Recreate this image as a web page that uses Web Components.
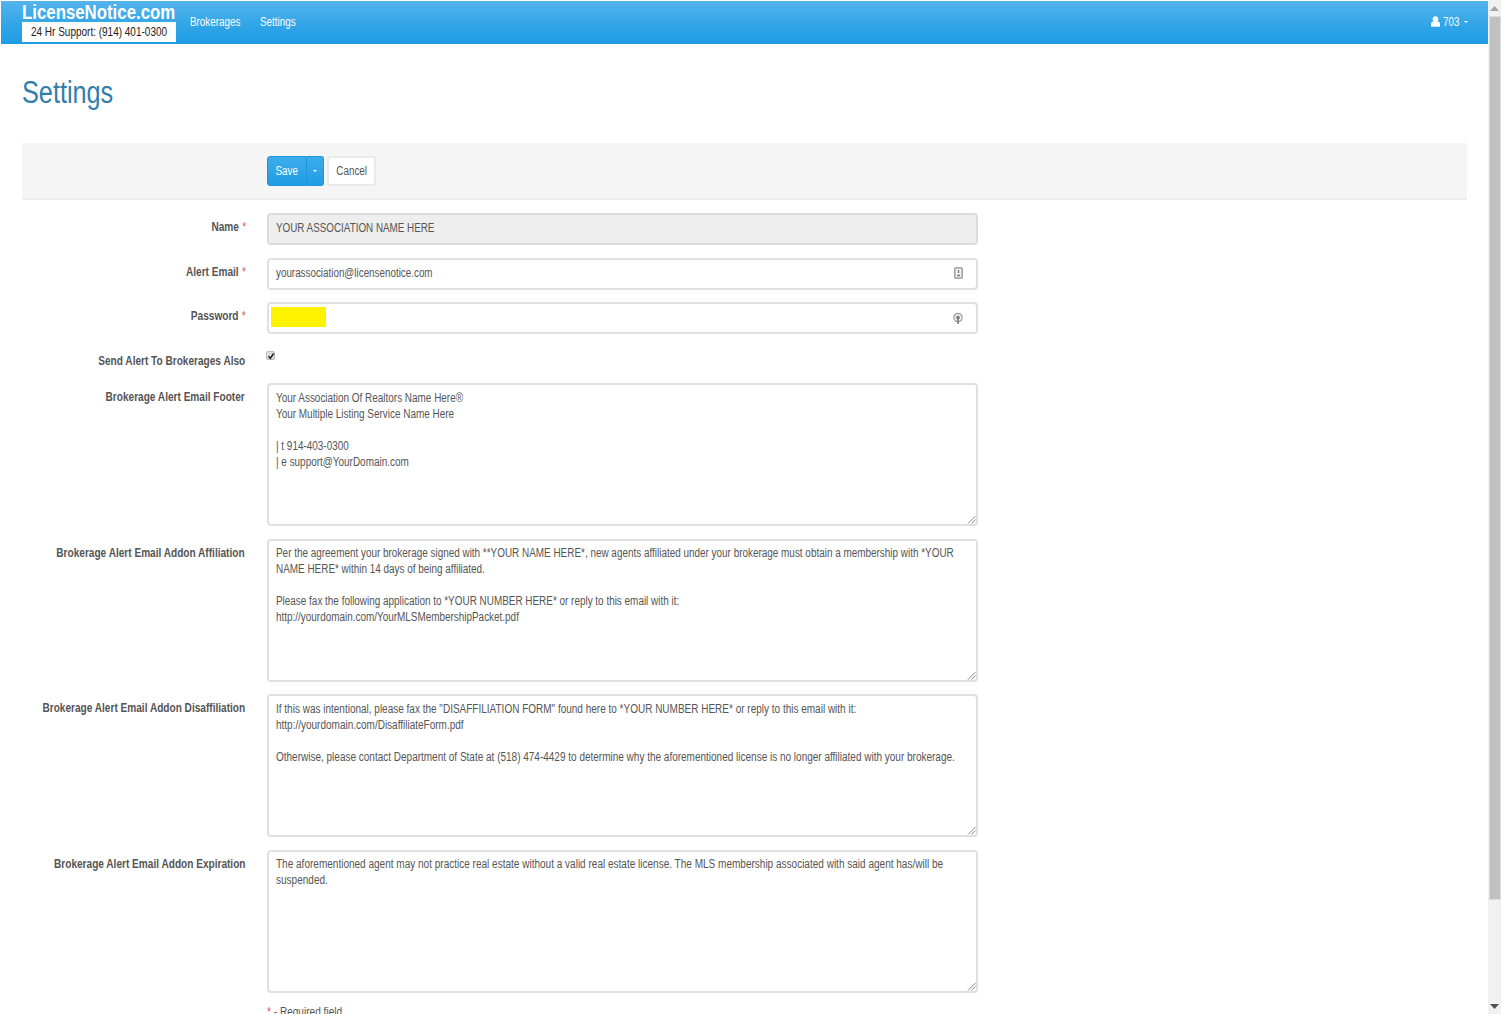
<!DOCTYPE html>
<html lang="en">
<head>
<meta charset="utf-8">
<title>Settings</title>
<style>
  html, body { margin: 0; height: 100%; background: #fff; overflow: hidden; }
  body { font: 12px/16px "Liberation Sans", Arial, sans-serif; color: #555; }
</style>
</head>
<body>
<app-shell>
  <top-nav></top-nav>
  <h-title>Settings</h-title>
  <form-toolbar></form-toolbar>
  <form-row label="Name" required style="--top:13px"><text-input disabled>YOUR ASSOCIATION NAME HERE</text-input></form-row>
  <form-row label="Alert Email" required style="--top:13px"><text-input icon="card">yourassociation@licensenotice.com</text-input></form-row>
  <form-row label="Password" required style="--top:12px;--label-top:6px"><text-input icon="key" masked></text-input></form-row>
  <form-row label="Send Alert To Brokerages Also" style="--top:16px;--label-top:3px"><check-box></check-box></form-row>
  <form-row label="Brokerage Alert Email Footer" style="--top:14px;--area-sq:.828"><text-area>Your Association Of Realtors Name Here®
Your Multiple Listing Service Name Here

| t 914-403-0300
| e support@YourDomain.com</text-area></form-row>
  <form-row label="Brokerage Alert Email Addon Affiliation" style="--top:13px;--pad:4px;--area-sq:.827"><text-area>Per the agreement your brokerage signed with **YOUR NAME HERE*, new agents affiliated under your brokerage must obtain a membership with *YOUR
NAME HERE* within 14 days of being affiliated.

Please fax the following application to *YOUR NUMBER HERE* or reply to this email with it:
http://yourdomain.com/YourMLSMembershipPacket.pdf</text-area></form-row>
  <form-row label="Brokerage Alert Email Addon Disaffiliation" style="--top:12px"><text-area>If this was intentional, please fax the "DISAFFILIATION FORM" found here to *YOUR NUMBER HERE* or reply to this email with it:
http://yourdomain.com/DisaffiliateForm.pdf

Otherwise, please contact Department of State at (518) 474-4429 to determine why the aforementioned license is no longer affiliated with your brokerage.</text-area></form-row>
  <form-row label="Brokerage Alert Email Addon Expiration" style="--top:13px;--pad:4px;--area-sq:.835"><text-area>The aforementioned agent may not practice real estate without a valid real estate license. The MLS membership associated with said agent has/will be
suspended.</text-area></form-row>
  <required-note></required-note>
</app-shell>
<script>
"use strict";
function define(name, css, html) {
  customElements.define(name, class extends HTMLElement {
    constructor() {
      super();
      this.attachShadow({ mode: 'open' }).innerHTML = `<style>${css}</style>${typeof html === 'function' ? html(this) : html}`;
    }
  });
}

// the reference is squeezed sideways, this keeps every text at about the same ratio
define('sq-text', `
  :host { display: block; white-space: pre; transform: scaleX(var(--sq, .82)); transform-origin: var(--o, left center); }
`, `<slot></slot>`);

define('app-shell', `
  :host { display: flex; height: 1014px; overflow: hidden; padding-right: 1px; }
  .page { flex: 1; min-width: 0; padding: 1px 0 0 1px; }
  .bar { flex: none; width: 13px; background: #f1f1f1; display: flex; flex-direction: column; align-items: center; }
  .arrow { height: 16px; display: flex; align-items: center; justify-content: center; }
  .thumb { width: 10px; height: 882px; background: #c1c1c1; border: 1px solid #dcdcdc; }
  .fill { flex: 1; }
`, `
  <div class="page"><slot></slot></div>
  <div class="bar">
    <div class="arrow"><svg width="9" height="5" viewBox="0 0 9 5"><path d="M4.5 0 9 5H0z" fill="#a3a3a3"/></svg></div>
    <div class="thumb"></div>
    <div class="fill"></div>
    <div class="arrow"><svg width="9" height="5" viewBox="0 0 9 5"><path d="M0 0h9L4.5 5z" fill="#505050"/></svg></div>
  </div>
`);

define('top-nav', `
  :host { display: flex; align-items: flex-start; height: 43px; color: #fff; box-sizing: border-box;
    background: linear-gradient(#54b4eb, #2fa4e7 60%, #1d9ce5); padding-left: 21px; }
  .brand { flex: none; width: 154px; }
  .name { font-size: 20.500px; font-weight: bold; line-height: 21px; }
  .support { background: #fff; color: #222; height: 20px; line-height: 20px; font-size: 12.200px; display: flex; justify-content: center; }
  .support sq-text { --o: center; }
  a { flex: none; color: #fff; line-height: 43px; }
  .b { width: 50px; margin-left: 14px; }
  .s { width: 37px; margin-left: 20px; }
  .user { margin-left: auto; margin-right: 20px; display: flex; align-items: center; height: 41px; }
  .user span { width: 17px; margin-left: 3px; }
  .caret { width: 0; height: 0; border: 2.500px solid transparent; border-top-color: #fff; border-bottom: 0; margin-left: 4px; }
`, `
  <div class="brand"><sq-text class="name">LicenseNotice.com</sq-text><div class="support"><sq-text>24 Hr Support: (914) 401-0300</sq-text></div></div>
  <a class="b"><sq-text>Brokerages</sq-text></a>
  <a class="s"><sq-text>Settings</sq-text></a>
  <div class="user">
    <svg width="9" height="11" viewBox="0 0 9 11"><circle cx="4.500" cy="3" r="2.800" fill="#fff"/><path d="M0 10.200V8c0-1.700 1.300-2.800 2.600-2.800h3.800C7.700 5.200 9 6.300 9 8v2.200c0 .4-.3.6-.6.6H.6c-.3 0-.6-.2-.6-.6z" fill="#fff"/></svg>
    <span><sq-text>703</sq-text></span><div class="caret"></div>
  </div>
`);

define('h-title', `
  :host { display: block; margin: 31px 0 0 21px; height: 68px; font-size: 30.800px; line-height: 36px; color: #317eac; }
`, `<sq-text><slot></slot></sq-text>`);

define('form-toolbar', `
  :host { display: flex; align-items: center; height: 55px; margin: 0 21px; padding-left: 245px; background: #f5f5f5; border-bottom: 2px solid #ececec; }
  sq-text { --o: center; }
  .save, .drop { height: 30px; margin-top: 1px; box-sizing: border-box; color: #fff; background: linear-gradient(#3dabea, #2fa4e7 50%, #1f9ce4); border: 1px solid #1b95dd; display: flex; align-items: center; justify-content: center; }
  .save { width: 40px; border-radius: 3px 0 0 3px; }
  .drop { width: 17px; border-left: 0; border-radius: 0 3px 3px 0; }
  .caret { width: 0; height: 0; border: 2.500px solid transparent; border-top-color: #fff; border-bottom: 0; }
  .cancel { width: 49px; height: 30px; margin-top: 1px; box-sizing: border-box; margin-left: 3px; background: #fff; border: 2px solid #eaeaea; border-radius: 3px; display: flex; align-items: center; justify-content: center; }
`, `
  <div class="save"><sq-text>Save</sq-text></div><div class="drop"><span class="caret"></span></div>
  <div class="cancel"><sq-text>Cancel</sq-text></div>
`);

define('form-row', `
  :host { display: grid; grid-template-columns: 244px 711px; column-gap: 22px; margin-top: var(--top, 13px); }
  label { display: flex; justify-content: flex-end; align-items: flex-start; font-weight: bold; color: #555; padding-top: var(--label-top, 6px); font-size: 12.300px; --o: right center; }
  i { font-style: normal; font-weight: normal; color: #d9534f; margin: 0 -1px 0 4px; }
`, host => `
  <label><sq-text>${host.getAttribute('label')}${host.hasAttribute('required') ? '<i>*</i>' : ''}</sq-text></label>
  <div><slot></slot></div>
`);

define('text-input', `
  :host { display: flex; align-items: center; box-sizing: border-box; height: 32px; padding: 0 13px 0 7px; border: 2px solid #e0e0e0; border-radius: 4px; background: #fff; }
  :host([disabled]) { background: #eee; border-color: #dcdcdc; }
  .txt { flex: 1; min-width: 0; margin-bottom: 2px; }
  .mask { width: 55px; height: 20px; margin-left: -5px; background: #fff200; }
  svg { flex: none; }
  .card { margin-bottom: 2px; }
`, host => {
  const icon = host.getAttribute('icon');
  const card = '<svg class="card" width="9" height="12" viewBox="0 0 9 12"><rect x=".8" y=".8" width="7.400" height="10.400" rx="1" fill="#f2f2f2" stroke="#8c8c8c" stroke-width="1.300"/><path d="M4.500 3v3M3 8.500h3" stroke="#777" stroke-width="1.300"/></svg>';
  const key = '<svg width="10" height="15" viewBox="0 0 10 15"><circle cx="5" cy="6.500" r="4.200" fill="#eee" stroke="#a0a0a0" stroke-width="1.200"/><circle cx="5" cy="6.500" r="1.800" fill="#777"/><path d="M5 7v6" stroke="#777" stroke-width="1.500"/></svg>';
  const mask = host.hasAttribute('masked') ? '<div class="mask"></div>' : '';
  return `<span class="txt">${mask}<sq-text><slot></slot></sq-text></span>${icon === 'card' ? card : icon === 'key' ? key : ''}`;
});

define('check-box', `
  :host { display: block; width: 7px; height: 7px; margin: 1px 0 0 -1px; background: #ddd; border: 1px solid #bbb; border-radius: 2px; position: relative; }
  svg { position: absolute; left: 0; top: 0; }
`, `<svg width="8" height="8" viewBox="0 0 8 8"><path d="M1.500 4.200 3.300 6.200 6.700 1.500" fill="none" stroke="#222" stroke-width="1.500"/></svg>`);

define('text-area', `
  :host { display: block; position: relative; box-sizing: border-box; height: 143px; padding: var(--pad, 5px) 7px 0; border: 2px solid #e0e0e0; border-radius: 4px; background: #fff; --sq: var(--area-sq, .833); }
  svg { position: absolute; right: 0; bottom: 0; }
`, `<sq-text><slot></slot></sq-text><svg width="9" height="9" viewBox="0 0 9 9"><path d="M8.500 1 1 8.500M8.500 4.500 4.500 8.500" stroke="#888" stroke-width="1"/></svg>`);

define('required-note', `
  :host { display: block; margin: 11px 0 0 266px; --sq: .84; }
  i { font-style: normal; color: #d9534f; }
`, `<sq-text><i>*</i> - Required field</sq-text>`);
</script>
</body>
</html>
